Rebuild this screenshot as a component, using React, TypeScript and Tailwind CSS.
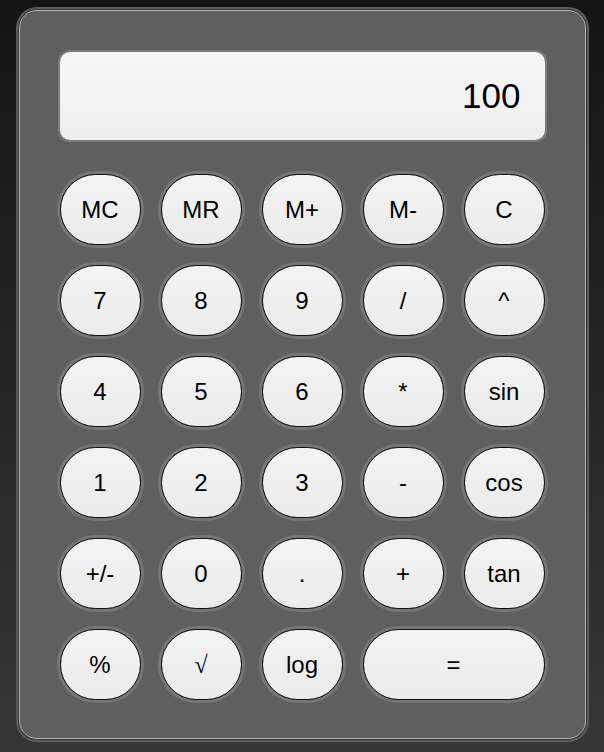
const rows: string[][] = [
  ['MC', 'MR', 'M+', 'M-', 'C'],
  ['7', '8', '9', '/', '^'],
  ['4', '5', '6', '*', 'sin'],
  ['1', '2', '3', '-', 'cos'],
  ['+/-', '0', '.', '+', 'tan'],
  ['%', '√', 'log', '='],
];

function Key({ label }: { label: string }) {
  const wide = label === '=';
  const root = label === '√';
  return (
    <button
      className={`h-[71px] rounded-full border border-[#111] bg-gradient-to-b from-[#f3f3f3] to-[#ebebeb] text-[24px] text-black shadow-[0_0_0_3px_#767676] ${
        wide ? 'col-span-2' : ''
      } ${root ? 'font-["Liberation_Serif",serif] text-[#3a4a66]' : ''}`}
    >
      {label}
    </button>
  );
}

export default function App() {
  return (
    <div
      className="min-h-screen bg-gradient-to-b from-[#141414] to-[#373737] pt-[10px] pb-[13px]"
      style={{ fontFamily: '"Liberation Sans", Arial, sans-serif' }}
    >
      <div className="mx-auto w-[567px] h-[729px] rounded-[18px] border border-[#b4b4b4] bg-[#5f5f5f] px-10 pt-[41px] pb-[38px] shadow-[0_0_0_1px_#333,0_0_0_3px_#5c5c5c]">
        <div className="flex h-[88px] items-center justify-end rounded-[10px] bg-gradient-to-b from-[#f7f7f7] to-[#eeeeee] pr-6 text-[35px] text-black shadow-[0_0_0_2px_#7d7d7d]">
          100
        </div>
        <div className="mt-[34px] grid grid-cols-5 gap-x-5 gap-y-5">
          {rows.flat().map((k) => (
            <Key key={k} label={k} />
          ))}
        </div>
      </div>
    </div>
  );
}
